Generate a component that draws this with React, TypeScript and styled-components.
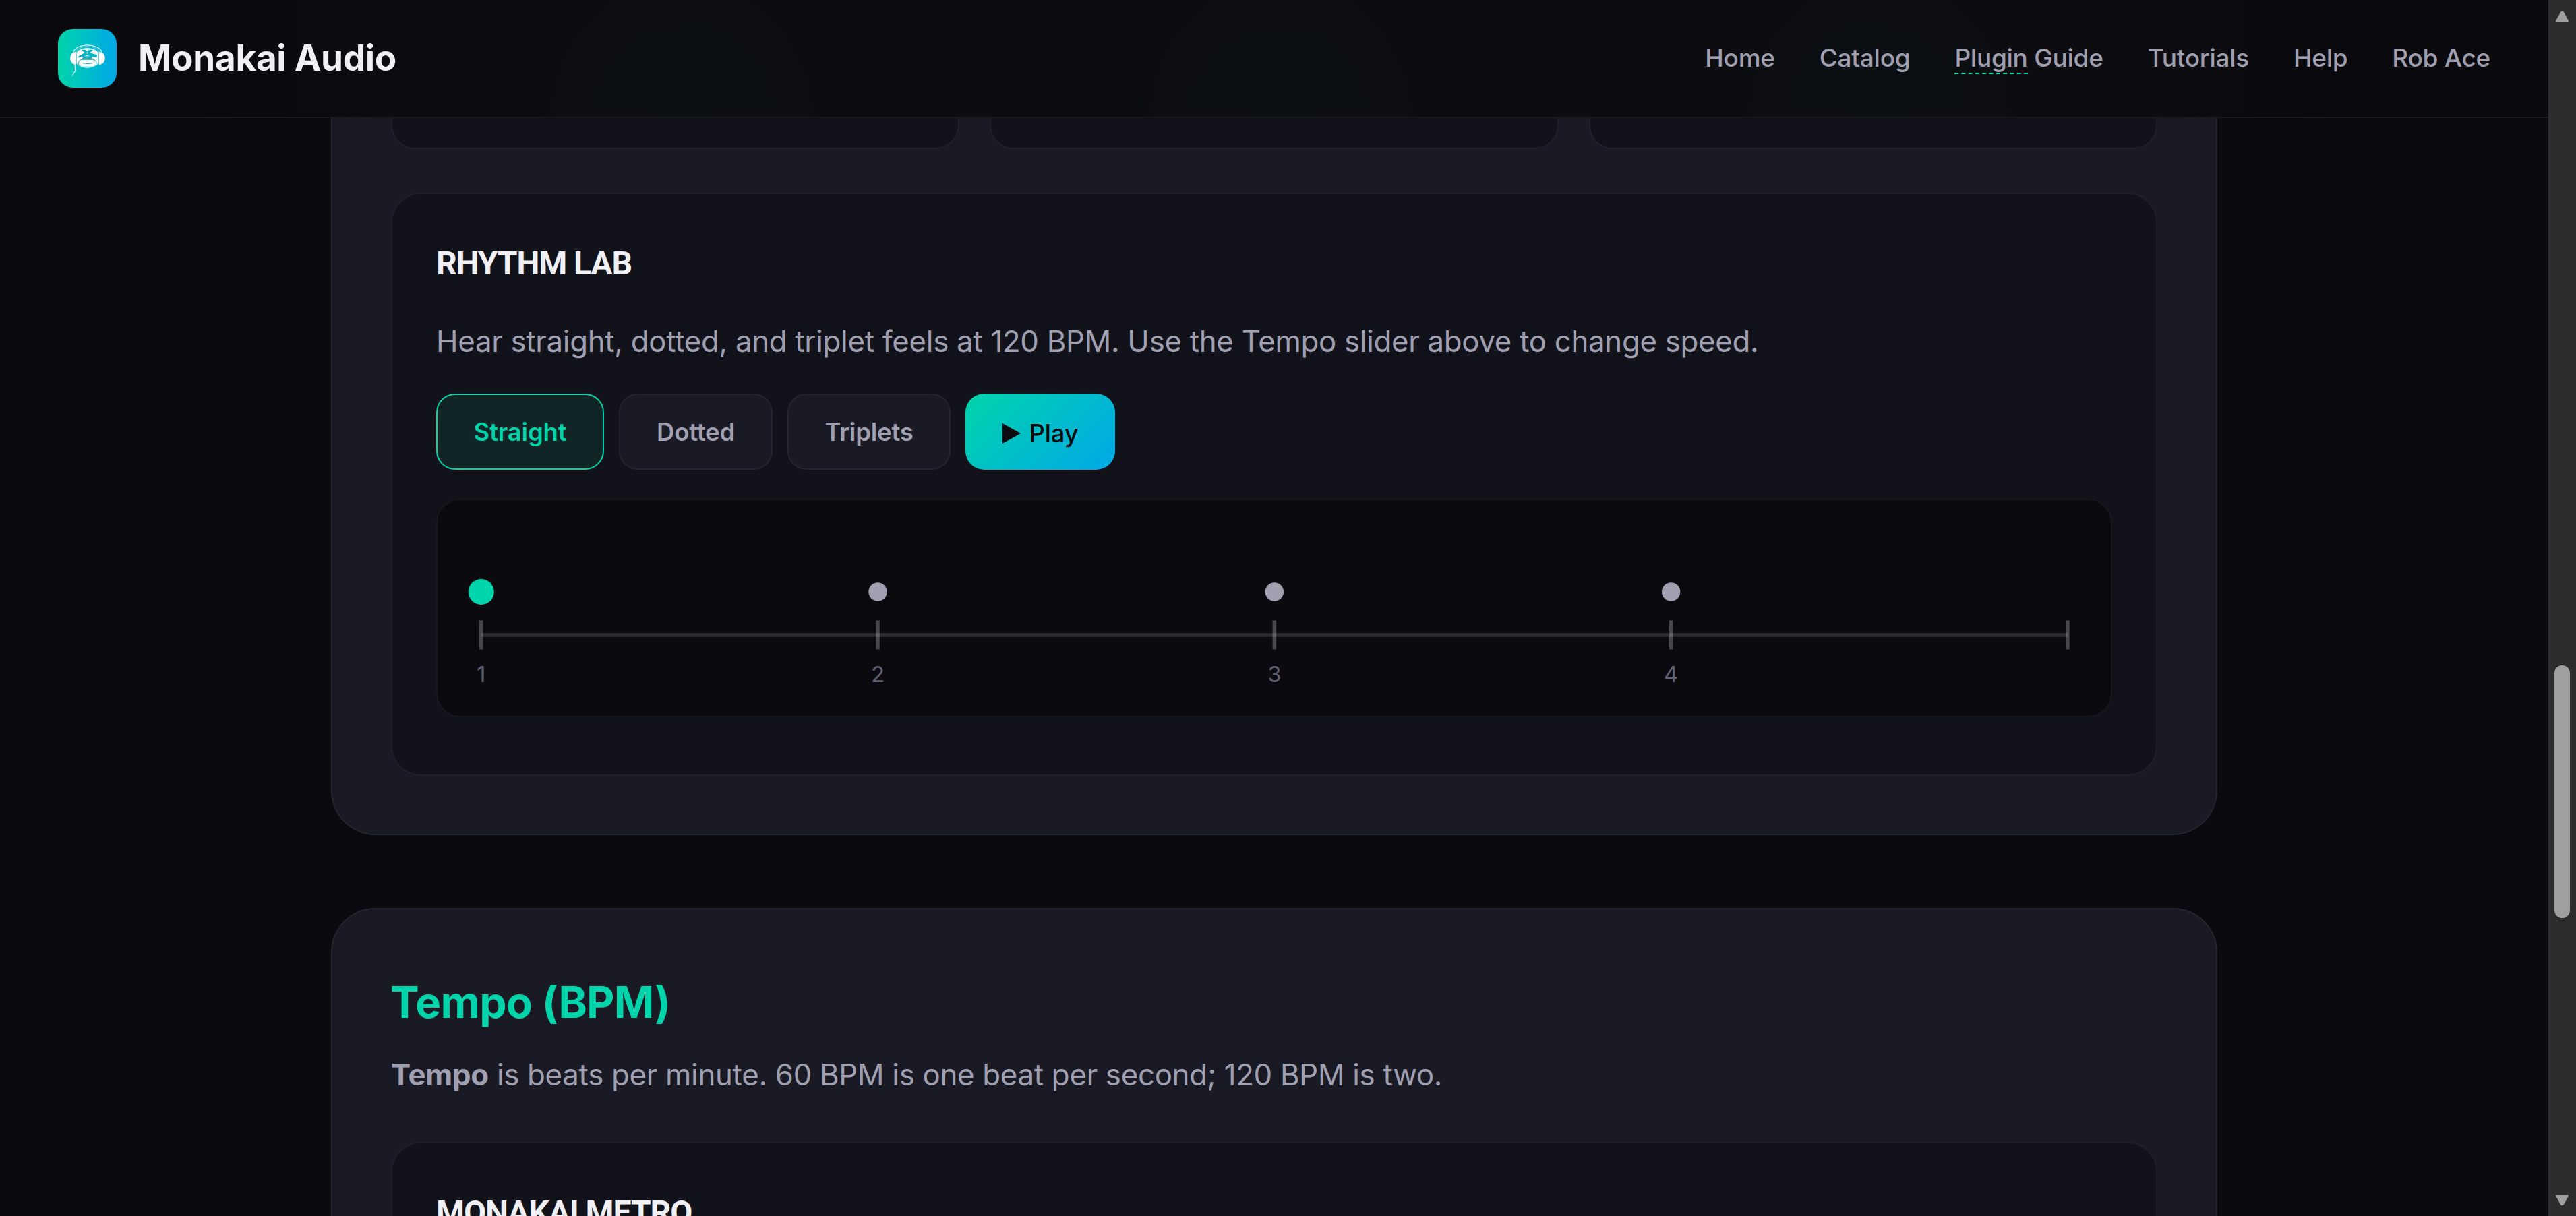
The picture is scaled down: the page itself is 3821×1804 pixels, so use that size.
import React from 'react';
import styled, { createGlobalStyle } from 'styled-components';

const c = {
  bg: '#0a0a0f', card: '#1a1a24', panel: '#12121a', text: '#f0f0f5', soft: '#a0a0b0',
  mute: '#606070', accent: '#00d4aa', blue: '#00a8e8',
};

const Global = createGlobalStyle`
  * { box-sizing: border-box; }
  html, body { margin: 0; padding: 0; background: ${c.bg}; overflow: hidden; }
  body { font-family: Inter, "Noto Sans", sans-serif; color: ${c.text}; }
`;

const Screen = styled.div`
  display: grid;
  grid-template: 175px 1629px / 3780px 41px;
  width: 3821px;
  height: 1804px;
  overflow: hidden;
`;

const Header = styled.header`
  display: flex;
  align-items: center;
  justify-content: space-between;
  padding: 0 86px;
  border-bottom: 2px solid #18181c;
  background:
    radial-gradient(ellipse 250px 260px at 1012px 100%, rgba(0, 40, 40, 0.15), rgba(0, 40, 40, 0.08) 70%, transparent),
    radial-gradient(ellipse 250px 260px at 1900px 100%, rgba(0, 40, 40, 0.15), rgba(0, 40, 40, 0.08) 70%, transparent),
    radial-gradient(ellipse 250px 260px at 2788px 100%, rgba(0, 40, 40, 0.15), rgba(0, 40, 40, 0.08) 70%, transparent),
    linear-gradient(90deg, #0a0a0e 300px, #0d0c10 600px, #0d0c10 3200px, #0a0a0e 3450px);
`;

const Brand = styled.div`
  display: flex;
  align-items: center;
  gap: 32px;
`;

const LogoTile = styled.div`
  width: 87px;
  height: 87px;
  border-radius: 22px;
  background: linear-gradient(90deg, ${c.accent}, ${c.blue});
  svg { display: block; }
`;

const BrandName = styled.span`
  padding-bottom: 2px;
  font-size: 53px;
  font-weight: 700;
  letter-spacing: -0.3px;
  white-space: nowrap;
`;

const Nav = styled.nav`
  display: flex;
  gap: 66px;
  padding-bottom: 2px;
`;

const NavLink = styled.a`
  font-size: 37px;
  font-weight: 500;
  line-height: 48px;
  letter-spacing: -0.27px;
  color: ${c.soft};
  white-space: nowrap;
`;

const Term = styled.span`
  border-bottom: 2px dashed ${c.accent};
`;

const ScrollTrack = styled.div`
  grid-column: 2;
  grid-row: 1 / 3;
  display: flex;
  flex-direction: column;
  align-items: center;
  background: #2c2c2c;
  padding: 16px 0 15px;
`;

const Thumb = styled.div`
  width: 23px;
  height: 375px;
  margin-top: 954px;
  margin-bottom: auto;
  border-radius: 12px;
  background: #9f9f9f;
`;

const Content = styled.main`
  display: flex;
  flex-direction: column;
  align-items: center;
  gap: 108px;
  height: 1629px;
  overflow: hidden;
`;

const Section = styled.section<{ $first?: boolean }>`
  width: 2798px;
  flex: none;
  height: ${p => (p.$first ? '1064px' : '700px')};
  padding: ${p => (p.$first ? '0 87px' : '86px 87px')};
  background: ${c.card};
  border: 2px solid #25252e;
  border-top-width: ${p => (p.$first ? 0 : 2)}px;
  border-radius: ${p => (p.$first ? '0 0 66px 66px' : '66px')};
`;

const Tiles = styled.div`
  display: grid;
  grid-template-columns: repeat(3, 1fr);
  gap: 45px;
  height: 46px;
  margin-bottom: 65px;
`;

const Tile = styled.div`
  background: ${c.panel};
  border: 2px solid #202026;
  border-top: 0;
  border-radius: 0 0 35px 35px;
`;

const Panel = styled.div`
  height: 865px;
  padding: 65px;
  background: ${c.panel};
  border: 2px solid #202026;
  border-radius: 44px;
`;

const PanelTitle = styled.h3`
  margin: 0;
  font-family: Roboto, Inter, sans-serif;
  font-size: 48px;
  font-weight: 700;
  line-height: 76px;
  letter-spacing: -1.1px;
  white-space: nowrap;
`;

const Text = styled.p`
  margin: 0;
  font-size: 43.75px;
  line-height: 74px;
  letter-spacing: -0.27px;
  color: ${c.soft};
  white-space: nowrap;
`;

const PanelText = styled(Text)`
  margin: 41px 0 40px;
`;

const Intro = styled(Text)`
  margin: 19px 0 62px;
`;

const Heading = styled.h2`
  margin: 0 0 0 -1px;
  font-size: 64px;
  font-weight: 700;
  line-height: 104px;
  letter-spacing: -0.7px;
  color: ${c.accent};
  white-space: nowrap;
`;

const Buttons = styled.div`
  display: flex;
  gap: 22px;
  margin: 0 0 43px;
`;

const Choice = styled.button<{ $width: number; $on?: boolean }>`
  width: ${p => p.$width}px;
  height: 113px;
  padding: 0;
  font: 600 36.5px Inter, "Noto Sans", sans-serif;
  letter-spacing: -0.2px;
  color: ${p => (p.$on ? c.accent : c.soft)};
  background: ${p => (p.$on ? '#112527' : c.card)};
  border: 2px solid ${p => (p.$on ? c.accent : '#25252e')};
  border-radius: 28px;
`;

const PlayButton = styled(Choice)`
  display: flex;
  align-items: center;
  justify-content: center;
  gap: 13px;
  padding-top: 4px;
  font-weight: 500;
  color: ${c.bg};
  background: linear-gradient(135deg, ${c.accent}, ${c.blue});
  border: 0;
`;

const Timeline = styled.div`
  height: 324px;
  background: ${c.bg};
  border: 2px solid #18181c;
  border-radius: 35px;
  svg { display: block; }
  text { font: 400 33px Inter, sans-serif; fill: ${c.mute}; text-anchor: middle; }
`;

const Logo = () => (
  <svg width="87" height="87" viewBox="18 15 261 261" fill="none">
    <path d="M86 119C98 76 200 76 214 119" stroke="#d5f2f4" strokeWidth="4" />
    <path d="M97 119C110 84 190 84 203 119" stroke="#8fd8dd" strokeWidth="2.5" />
    <path d="M98 117V173C82 174 73 162 73 145S82 117 98 117Z" fill="#fff" />
    <path d="M200 117V173C218 174 227 162 227 145S218 117 200 117Z" fill="#fff" />
    <path
      d="M101 119C116 103 134 100 148 100S182 103 197 119V168C186 183 168 188 149 188S112 183 101 168Z"
      fill="#fff"
    />
    <path
      d="M122 108Q135 104 148 112Q162 104 175 108L161 119Q176 127 193 130L190 142L166 138L172 147H125L131 138L104 142L112 134Q126 128 136 119Z"
      fill="#08b4c4"
    />
    <path d="M143 121L148 118L154 121L148 125ZM134 138L148 131L162 138L148 135Z" fill="#fff" />
    <rect x="109" y="151" width="80" height="33" rx="16.500" stroke="#08b4c4" strokeWidth="3" fill="#fff" />
    <path d="M128 167Q148 172 170 168" stroke="#08b4c4" strokeWidth="3" />
    <path d="M98.500 117V173M199 117V173" stroke="#7fcfd6" strokeWidth="2.500" />
    <path d="M94 173C92 186 96 192 95 202C90 210 83 216 82 224" stroke="#e2f6f4" strokeWidth="3.500" />
  </svg>
);

const beats = [0, 1, 2, 3, 4].map(i => 64.75 + i * 588.3);

const BeatGraph = () => (
  <svg width="2482" height="320" viewBox="0 0 2482 320">
    <line x1={beats[0]} x2={beats[4]} y1="200" y2="200" stroke="rgba(255,255,255,.15)" strokeWidth="5.5" />
    {beats.map((x, i) => (
      <g key={i}>
        <line x1={x} x2={x} y1="178.500" y2="221.500" stroke="rgba(255,255,255,.25)" strokeWidth="5.500" />
        {i < 4 && <circle cx={x} cy="136" r={i ? 13.7 : 19} fill={i ? c.soft : c.accent} />}
        {i < 4 && <text x={x} y="270">{i + 1}</text>}
      </g>
    ))}
  </svg>
);

const Arrow = ({ down }: { down?: boolean }) => (
  <svg width="21" height="17" viewBox="0 0 21 17">
    <path
      d={down ? 'M2 2H19L12 14.500Q10.500 16 9 14.500Z' : 'M2 15H19L12 2.500Q10.500 1 9 2.500Z'}
      fill="#9f9f9f" stroke="#9f9f9f" strokeWidth="2" strokeLinejoin="round"
    />
  </svg>
);

export default function App() {
  return (
    <>
      <Global />
      <Screen>
        <Header>
          <Brand>
            <LogoTile><Logo /></LogoTile>
            <BrandName>Monakai Audio</BrandName>
          </Brand>
          <Nav>
            <NavLink>Home</NavLink>
            <NavLink>Catalog</NavLink>
            <NavLink><Term>Plugin</Term> Guide</NavLink>
            <NavLink>Tutorials</NavLink>
            <NavLink>Help</NavLink>
            <NavLink>Rob Ace</NavLink>
          </Nav>
        </Header>
        <ScrollTrack>
          <Arrow />
          <Thumb />
          <Arrow down />
        </ScrollTrack>
        <Content>
          <Section $first>
            <Tiles><Tile /><Tile /><Tile /></Tiles>
            <Panel>
              <PanelTitle>RHYTHM LAB</PanelTitle>
              <PanelText>Hear straight, dotted, and triplet feels at 120 BPM. Use the Tempo slider above to change speed.</PanelText>
              <Buttons>
                <Choice $width={249} $on>Straight</Choice>
                <Choice $width={228}>Dotted</Choice>
                <Choice $width={242}>Triplets</Choice>
                <PlayButton $width={222}>
                  <svg width="27" height="30" viewBox="0 0 27 30"><path d="M0 0L27 15L0 30Z" fill={c.bg} /></svg>
                  Play
                </PlayButton>
              </Buttons>
              <Timeline><BeatGraph /></Timeline>
            </Panel>
          </Section>
          <Section>
            <Heading>Tempo (BPM)</Heading>
            <Intro><strong>Tempo</strong> is beats per minute. 60 BPM is one beat per second; 120 BPM is two.</Intro>
            <Panel>
              <PanelTitle>MONAKAI METRO</PanelTitle>
            </Panel>
          </Section>
        </Content>
      </Screen>
    </>
  );
}
